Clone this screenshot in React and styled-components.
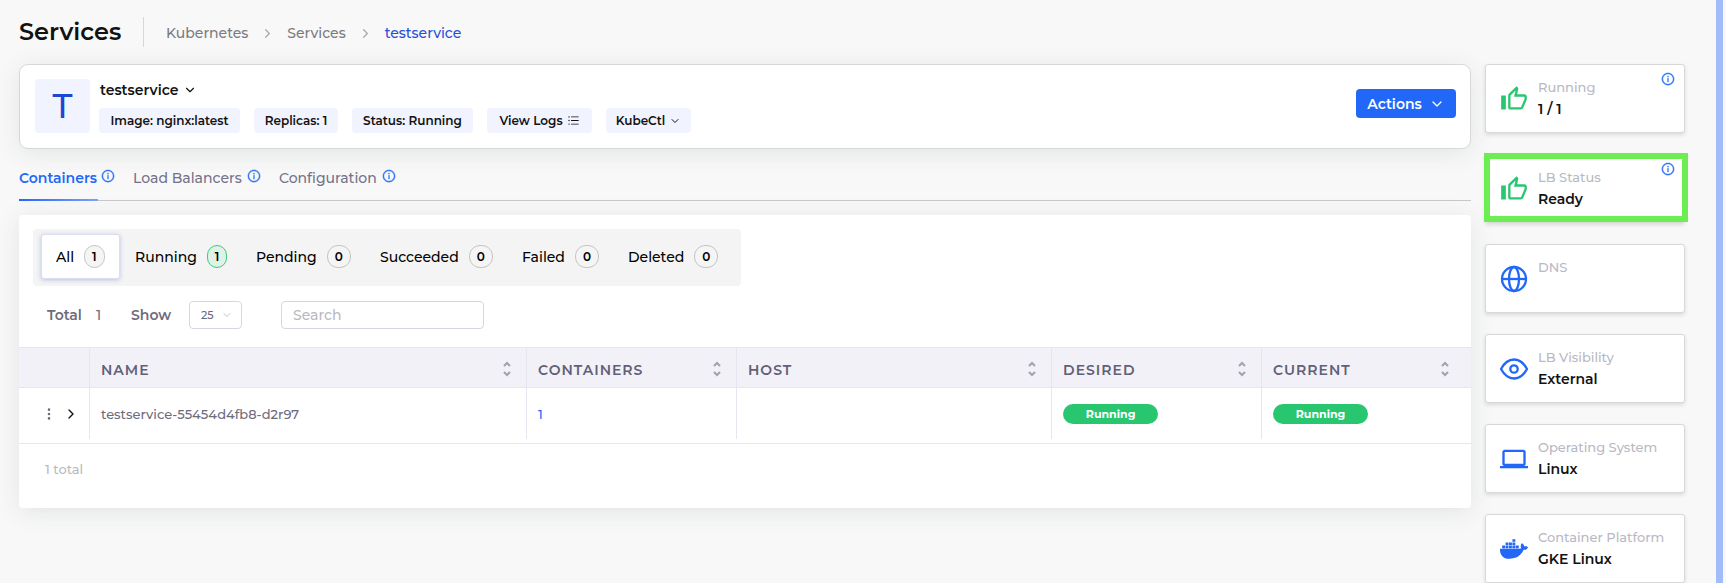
import React from "react";
import styled, { createGlobalStyle } from "styled-components";
import { ChevronDown, ChevronRight } from "lucide-react";
import { BsThreeDotsVertical } from "react-icons/bs";
import { AiOutlineInfoCircle, AiOutlineUnorderedList } from "react-icons/ai";
import { MdOutlineThumbUp, MdOutlineLaptop } from "react-icons/md";
import { FaDocker } from "react-icons/fa";

const GlobalStyle = createGlobalStyle`
  * { box-sizing: border-box; }
  body {
    margin: 0;
    background: #f8f8f8;
    color: #121212;
    font-family: Montserrat, Inter, "Liberation Sans", sans-serif;
    font-size: 14px;
    font-weight: 500;
    line-height: 20px;
  }
  button, input, select { font: inherit; color: inherit; }
  button { border: 0; background: none; padding: 0; white-space: nowrap; }
  a { color: inherit; text-decoration: none; }
`;

const Page = styled.div`
  display: flex;
  min-height: 100vh;
`;

const Content = styled.div`
  flex: 1;
  min-width: 0;
  padding: 17px 31px 0 19px;
`;

const ScrollEdge = styled.div`
  width: 7px;
  margin-right: 3px;
  background: #a1bcf8;
`;

const Header = styled.header`
  display: flex;
  align-items: center;
  height: 30px;
  margin-bottom: 17px;
`;

const Title = styled.h1`
  width: 125px;
  margin: 0;
  border-right: 1px solid #d6d6dc;
  font-size: 24px;
  font-weight: 600;
  line-height: 30px;
`;

const Breadcrumb = styled.nav`
  display: flex;
  align-items: center;
  padding: 2px 0 0 22px;
  gap: 12px;
  color: #7b7b80;

  svg { color: #a9a9b0; }
`;

const Crumb = styled.a`
  color: ${(p) => (p.$current ? "#2a4fd8" : "inherit")};
`;

const Columns = styled.div`
  display: flex;
  align-items: flex-start;
  gap: 14px;
`;

const Main = styled.main`
  flex: 1;
  min-width: 0;
`;

const ServiceCard = styled.section`
  display: flex;
  align-items: flex-start;
  height: 85px;
  padding: 14px 14px 0 15px;
  border: 1px solid #d8d8d8;
  border-radius: 9px;
  background: #fff;
  box-shadow: 0 4px 24px rgba(34, 60, 50, 0.1);
`;

const Avatar = styled.div`
  flex: none;
  width: 55px;
  height: 54px;
  border-radius: 4px;
  background: #f1f3ff;
  color: #1d46d2;
  font-size: 34px;
  line-height: 54px;
  text-align: center;
`;

const ServiceInfo = styled.div`
  flex: 1;
  padding-left: 9px;
`;

const ServiceName = styled.button`
  display: flex;
  align-items: center;
  gap: 5px;
  height: 21px;
  margin-bottom: 8px;
  padding-left: 1px;
  font-weight: 600;
`;

const Chips = styled.div`
  display: flex;
  gap: 14px;
`;

const Chip = styled.span`
  display: flex;
  align-items: center;
  justify-content: center;
  gap: 4px;
  height: 25px;
  min-width: ${(p) => p.$width}px;
  border-radius: 4px;
  background: #f1f3ff;
  font-size: 12px;
  font-weight: 600;
  white-space: nowrap;
`;

const ActionsButton = styled.button`
  display: flex;
  align-items: center;
  justify-content: center;
  gap: 7px;
  width: 100px;
  height: 29px;
  margin-top: 10px;
  border-radius: 4px;
  background: #2168f8;
  color: #fff;
  font-weight: 600;
`;

const Tabs = styled.nav`
  display: flex;
  gap: 18px;
  height: 52px;
  padding-top: 18px;
  border-bottom: 1px solid #c8c8cb;
`;

const Tab = styled.div`
  display: flex;
  gap: 3px;
  height: 34px;

  svg { color: #2f74f8; margin-top: 2px; }
`;

const TabLink = styled.a`
  min-width: ${(p) => p.$width}px;
  padding-top: 1px;
  color: ${(p) => (p.$active ? "#2168f8" : "#72728a")};
  font-weight: ${(p) => (p.$active ? 600 : 500)};
  white-space: nowrap;
  border-bottom: 2px solid transparent;
  border-image: ${(p) => (p.$active ? "linear-gradient(90deg, #2168f8, #7ba3f8) 1" : "none")};
`;

const Panel = styled.section`
  height: 293px;
  margin-top: 14px;
  padding-top: 14px;
  border-radius: 4px;
  background: #fff;
  box-shadow: 0 4px 24px rgba(34, 60, 50, 0.1);
`;

const Filters = styled.div`
  display: flex;
  width: max-content;
  height: 57px;
  margin-left: 14px;
  padding: 5px 8px 0;
  border-radius: 4px;
  background: #f4f4f4;
`;

const Filter = styled.button`
  display: flex;
  align-items: center;
  gap: 10px;
  width: ${(p) => p.$width}px;
  height: 45px;
  padding: 0 14px;
  border: 1px solid ${(p) => (p.$active ? "#dadff0" : "transparent")};
  border-radius: 3px;
  background: ${(p) => (p.$active ? "#fff" : "none")};
  box-shadow: ${(p) => (p.$active ? "0 1px 4px rgba(80, 100, 200, 0.35)" : "none")};
  color: #000;
`;

const Count = styled.span`
  padding: 0 7px;
  border: 1px solid ${(p) => (p.$green ? "#3dcb7d" : "#c4c4c4")};
  border-radius: 11px;
  background: ${(p) => (p.$green ? "#def2e7" : "#f5f5f5")};
  font-size: 12px;
  font-weight: 600;
  line-height: 21px;
`;

const Controls = styled.div`
  display: flex;
  align-items: center;
  height: 28px;
  margin: 15px 0 18px 28px;
  color: #6e6b7b;
`;

const TotalLabel = styled.span`
  width: 49px;
  font-weight: 600;
`;

const TotalValue = styled.span`
  width: 35px;
`;

const ShowLabel = styled.label`
  width: 58px;
  font-weight: 600;
`;

const SelectBox = styled.div`
  display: grid;
  align-items: center;
  width: 53px;
  margin-right: 39px;

  > * { grid-area: 1 / 1; }
  svg { justify-self: end; margin-right: 9px; color: #c3c1cc; pointer-events: none; }
`;

const PageSize = styled.select`
  appearance: none;
  width: 100%;
  height: 28px;
  padding: 0 11px;
  border: 1px solid #d8d6de;
  border-radius: 4px;
  background: #fff;
  font-size: 11px;
`;

const SearchInput = styled.input`
  width: 203px;
  height: 28px;
  padding: 0 11px;
  border: 1px solid #d8d6de;
  border-radius: 4px;
  background: #fff;

  &::placeholder { color: #b9b9c3; opacity: 1; }
`;

const Table = styled.table`
  width: 100%;
  table-layout: fixed;
  border-collapse: separate;
  border-spacing: 0;
`;

const Col = styled.col`
  width: ${(p) => p.$width};
`;

const HeadCell = styled.th`
  height: 41px;
  padding: 4px 14px 0 11px;
  border-top: 1px solid #e6e5f0;
  border-bottom: 1px solid #e6e5f0;
  border-right: 1px solid #e6e5f0;
  background: #f2f1f7;
  color: #625f78;
  font-weight: 600;
  letter-spacing: 1px;
  text-align: left;

  &:last-child { border-right: 0; padding-right: 21px; }
`;

const HeadContent = styled.div`
  display: flex;
  align-items: center;
  justify-content: space-between;

  svg { color: #a3a1b0; margin-bottom: 2px; }
`;

const BodyCell = styled.td`
  height: 56px;
  padding: 0 0 4px;
  border-bottom: 1px solid #e6e5f0;
  color: #6e6b7b;
  font-size: 13px;
`;

const CellContent = styled.div`
  display: flex;
  align-items: center;
  height: 51px;
  padding: 0 11px;
  border-right: 1px solid ${(p) => (p.$last ? "transparent" : "#e6e5f0")};
`;

const RowActions = styled(CellContent)`
  gap: 7px;
  padding: 0 8px 0 23px;
`;

const IconButton = styled.button`
  display: flex;
  color: ${(p) => (p.$dark ? "#121212" : "#6e6b7b")};
`;

const CountLink = styled.a`
  color: #2168f8;
`;

const StatusBadge = styled.span`
  width: 95px;
  height: 20px;
  border-radius: 10px;
  background: #28c76f;
  color: #fff;
  font-size: 11px;
  font-weight: 700;
  text-align: center;
`;

const TableFooter = styled.p`
  margin: 15px 0 0 26px;
  color: #b9b9c3;
  font-size: 13px;
`;

const Side = styled.aside`
  display: flex;
  flex-direction: column;
  flex: none;
  gap: 21px;
  width: 200px;
`;

const StatCard = styled.section`
  position: relative;
  display: flex;
  align-items: flex-start;
  gap: 10px;
  height: 69px;
  padding: 11px 8px 0 14px;
  border: 1px solid #d8d8d8;
  border-radius: 3px;
  background: #fff;
  box-shadow: 0 2px 4px rgba(0, 0, 0, 0.12);
`;

const StatIcon = styled.div`
  display: flex;
  width: 28px;
  height: 28px;
  margin-top: 9px;
  color: ${(p) => (p.$green ? "#28c76f" : "#2168f8")};
`;

const StatText = styled.div`
  flex: 1;
  white-space: nowrap;
`;

const StatLabel = styled.div`
  color: #b9b9c3;
  font-size: 13px;
  line-height: 22px;
`;

const StatValue = styled.div`
  font-weight: 600;
  line-height: 22px;
`;

const InfoMark = styled.span`
  position: absolute;
  top: 7px;
  right: 9px;
  display: flex;
  color: #2f74f8;
`;

const Highlight = styled.span`
  position: absolute;
  inset: -2px -4px 0 -2px;
  border: 6px solid #6cee52;
  pointer-events: none;
`;

const InfoIcon = () => <AiOutlineInfoCircle size={14} strokeWidth={28} />;

const SortIcon = () => (
  <svg width="10" height="16" viewBox="0 0 10 16" fill="none" stroke="currentColor" strokeWidth="2">
    <path d="M2 5L5 2L8 5M2 11L5 14L8 11" />
  </svg>
);

const GlobeIcon = () => (
  <svg width="28" height="28" viewBox="0 0 28 28" fill="none" stroke="currentColor" strokeWidth="2.3">
    <circle cx="14" cy="14" r="12" />
    <ellipse cx="14" cy="14" rx="5" ry="12" />
    <path d="M2 14h24" />
  </svg>
);

const EyeIcon = () => (
  <svg width="28" height="28" viewBox="0 0 28 28" fill="none" stroke="currentColor" strokeWidth="2.3" strokeLinejoin="round">
    <path d="M1 14C4 8.500 8.500 4.500 14 4.500S24 8.500 27 14C24 19.500 19.500 23.500 14 23.500S4 19.500 1 14Z" />
    <circle cx="14" cy="14" r="3.7" />
  </svg>
);

const tabs = [
  { label: "Containers", width: 79, active: true },
  { label: "Load Balancers", width: 111 },
  { label: "Configuration", width: 100 },
];

const filters = [
  { label: "All", count: 1, width: 79, active: true },
  { label: "Running", count: 1, width: 121, green: true },
  { label: "Pending", count: 0, width: 124 },
  { label: "Succeeded", count: 0, width: 142 },
  { label: "Failed", count: 0, width: 106 },
  { label: "Deleted", count: 0, width: 120 },
];

const columns = ["Name", "Containers", "Host", "Desired", "Current"];

const stats = [
  { label: "Running", value: "1 / 1", icon: <MdOutlineThumbUp size={28} />, green: true, info: true },
  { label: "LB Status", value: "Ready", icon: <MdOutlineThumbUp size={28} />, green: true, info: true, highlight: true },
  { label: "DNS", value: "", icon: <GlobeIcon /> },
  { label: "LB Visibility", value: "External", icon: <EyeIcon /> },
  { label: "Operating System", value: "Linux", icon: <MdOutlineLaptop size={28} /> },
  { label: "Container Platform", value: "GKE Linux", icon: <FaDocker size={28} /> },
];

export default function App() {
  return (
    <>
      <GlobalStyle />
      <Page>
        <Content>
          <Header>
            <Title>Services</Title>
            <Breadcrumb aria-label="Breadcrumb">
              <Crumb href="#kubernetes">Kubernetes</Crumb>
              <ChevronRight size={15} />
              <Crumb href="#services">Services</Crumb>
              <ChevronRight size={15} />
              <Crumb href="#testservice" $current>testservice</Crumb>
            </Breadcrumb>
          </Header>
          <Columns>
            <Main>
              <ServiceCard>
                <Avatar>T</Avatar>
                <ServiceInfo>
                  <ServiceName>
                    testservice
                    <ChevronDown size={14} />
                  </ServiceName>
                  <Chips>
                    <Chip $width={141}>Image: nginx:latest</Chip>
                    <Chip $width={84}>Replicas: 1</Chip>
                    <Chip $width={121}>Status: Running</Chip>
                    <Chip as="button" $width={105}>
                      View Logs
                      <AiOutlineUnorderedList size={13} />
                    </Chip>
                    <Chip as="button" $width={85}>
                      KubeCtl
                      <ChevronDown size={12} />
                    </Chip>
                  </Chips>
                </ServiceInfo>
                <ActionsButton>
                  Actions
                  <ChevronDown size={16} />
                </ActionsButton>
              </ServiceCard>
              <Tabs aria-label="Service sections">
                {tabs.map((t) => (
                  <Tab key={t.label}>
                    <TabLink href={"#" + t.label} $width={t.width} $active={t.active}>{t.label}</TabLink>
                    <InfoIcon />
                  </Tab>
                ))}
              </Tabs>
              <Panel>
                <Filters>
                  {filters.map((f) => (
                    <Filter key={f.label} $width={f.width} $active={f.active}>
                      {f.label}
                      <Count $green={f.green}>{f.count}</Count>
                    </Filter>
                  ))}
                </Filters>
                <Controls>
                  <TotalLabel>Total</TotalLabel>
                  <TotalValue>1</TotalValue>
                  <ShowLabel htmlFor="page-size">Show</ShowLabel>
                  <SelectBox>
                    <PageSize id="page-size" defaultValue="25">
                      <option>25</option>
                      <option>50</option>
                    </PageSize>
                    <ChevronDown size={12} />
                  </SelectBox>
                  <SearchInput type="text" placeholder="Search" aria-label="Search" />
                </Controls>
                <Table>
                  <colgroup>
                    <Col $width="71px" />
                    <Col $width="30.1%" />
                    <Col $width="14.46%" />
                    <Col $width="21.7%" />
                    <Col $width="14.46%" />
                    <Col $width="auto" />
                  </colgroup>
                  <thead>
                    <tr>
                      <HeadCell aria-label="Row actions" />
                      {columns.map((c) => (
                        <HeadCell key={c} scope="col">
                          <HeadContent>
                            {c.toUpperCase()}
                            <SortIcon />
                          </HeadContent>
                        </HeadCell>
                      ))}
                    </tr>
                  </thead>
                  <tbody>
                    <tr>
                      <BodyCell>
                        <RowActions>
                          <IconButton aria-label="More"><BsThreeDotsVertical size={14} /></IconButton>
                          <IconButton aria-label="Expand" $dark><ChevronRight size={16} /></IconButton>
                        </RowActions>
                      </BodyCell>
                      <BodyCell><CellContent>testservice-55454d4fb8-d2r97</CellContent></BodyCell>
                      <BodyCell><CellContent><CountLink href="#containers">1</CountLink></CellContent></BodyCell>
                      <BodyCell><CellContent /></BodyCell>
                      <BodyCell><CellContent><StatusBadge>Running</StatusBadge></CellContent></BodyCell>
                      <BodyCell><CellContent $last><StatusBadge>Running</StatusBadge></CellContent></BodyCell>
                    </tr>
                  </tbody>
                </Table>
                <TableFooter>1 total</TableFooter>
              </Panel>
            </Main>
            <Side>
              {stats.map((s) => (
                <StatCard key={s.label}>
                  <StatIcon $green={s.green}>{s.icon}</StatIcon>
                  <StatText>
                    <StatLabel>{s.label}</StatLabel>
                    <StatValue>{s.value}</StatValue>
                  </StatText>
                  {s.highlight && <Highlight />}
                  {s.info && <InfoMark><InfoIcon /></InfoMark>}
                </StatCard>
              ))}
            </Side>
          </Columns>
        </Content>
        <ScrollEdge />
      </Page>
    </>
  );
}
